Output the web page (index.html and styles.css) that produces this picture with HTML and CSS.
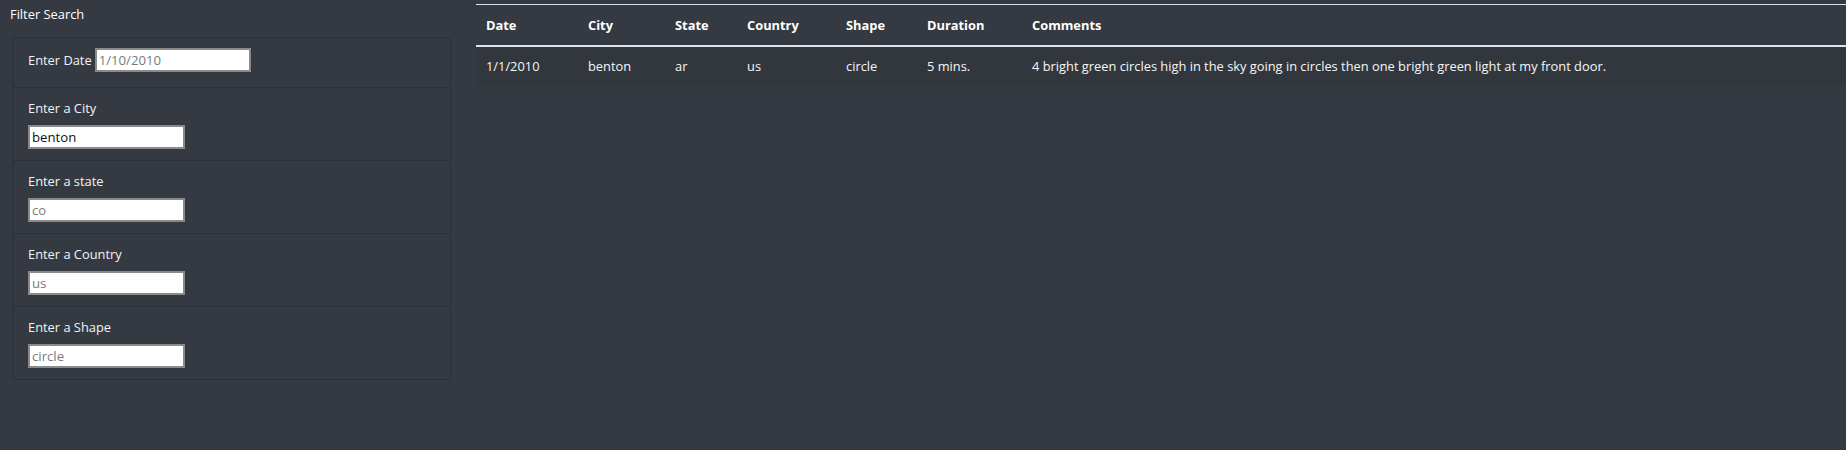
FILE: index.html
```html
<!DOCTYPE html>
<html lang="en">
<head>
<meta charset="utf-8">
<title>UFO Sightings</title>
<link rel="stylesheet" href="styles.css">
</head>
<body>
<div class="layout">
  <aside class="sidebar">
    <div class="sidebar-title">Filter Search</div>
    <ul class="filters">
      <li class="filter filter-inline">
        <label class="filter-label" for="datetime">Enter Date</label>
        <input class="filter-input" id="datetime" type="text" placeholder="1/10/2010">
      </li>
      <li class="filter">
        <label class="filter-label" for="city">Enter a City</label>
        <input class="filter-input" id="city" type="text" value="benton">
      </li>
      <li class="filter">
        <label class="filter-label" for="state">Enter a state</label>
        <input class="filter-input" id="state" type="text" placeholder="co">
      </li>
      <li class="filter">
        <label class="filter-label" for="country">Enter a Country</label>
        <input class="filter-input" id="country" type="text" placeholder="us">
      </li>
      <li class="filter">
        <label class="filter-label" for="shape">Enter a Shape</label>
        <input class="filter-input" id="shape" type="text" placeholder="circle">
      </li>
    </ul>
  </aside>
  <main class="results">
    <table class="ufo-table">
      <colgroup>
        <col class="c-date">
        <col class="c-city">
        <col class="c-state">
        <col class="c-country">
        <col class="c-shape">
        <col class="c-duration">
        <col class="c-comments">
      </colgroup>
      <thead>
        <tr>
          <th>Date</th>
          <th>City</th>
          <th>State</th>
          <th>Country</th>
          <th>Shape</th>
          <th>Duration</th>
          <th>Comments</th>
        </tr>
      </thead>
      <tbody>
        <tr>
          <td>1/1/2010</td>
          <td>benton</td>
          <td>ar</td>
          <td>us</td>
          <td>circle</td>
          <td>5 mins.</td>
          <td>4 bright green circles high in the sky going in circles then one bright green light at my front door.</td>
        </tr>
      </tbody>
    </table>
  </main>
</div>
</body>
</html>
```

FILE: styles.css
```css
html, body {
  margin: 0;
  padding: 0;
}

body {
  background: #353a42;
  color: #f4f5f6;
  font-family: "Open Sans", "Noto Sans", "DejaVu Sans", sans-serif;
  font-size: 12.85px;
  line-height: 20px;
  min-height: 450px;
}

.layout {
  display: flex;
  align-items: flex-start;
}

.sidebar {
  width: 439px;
  flex: none;
  padding: 4px 0 0 12px;
}

.sidebar-title {
  margin-left: -2px;
  color: #ffffff;
}

.filters {
  list-style: none;
  margin: 13px 0 0 0;
  padding: 0;
  border: 1px solid #2c3037;
  border-radius: 4px;
}

.filter {
  display: flex;
  flex-direction: column;
  align-items: flex-start;
  padding: 10px 15px 11px;
  border-top: 1px solid #2c3037;
}

.filter:first-child {
  border-top: none;
}

.filter-inline {
  flex-direction: row;
  align-items: center;
  gap: 3px;
  padding: 10px 15px 15px;
}

.filter-label {
  color: #f2f3f4;
  margin-bottom: 7px;
}

.filter-inline .filter-label {
  margin-bottom: 0;
}

.filter-input {
  box-sizing: border-box;
  width: 157px;
  height: 24px;
  margin: 0;
  padding: 0 2px;
  border: 2px solid #8a8a8a;
  border-radius: 0;
  background: #ffffff;
  color: #111111;
  font-family: inherit;
  font-size: 13.2px;
  outline: none;
}

.filter-inline .filter-input {
  width: 156px;
}

.filter-input::placeholder {
  color: #7a7a7a;
  opacity: 1;
}

.results {
  flex: 1;
  min-width: 0;
  padding: 4px 0 0 25px;
}

.ufo-table {
  width: 100%;
  table-layout: fixed;
  border-collapse: collapse;
  color: #ffffff;
}

.c-date { width: 102px; }
.c-city { width: 87px; }
.c-state { width: 72px; }
.c-country { width: 99px; }
.c-shape { width: 81px; }
.c-duration { width: 105px; }

.ufo-table th,
.ufo-table td {
  text-align: left;
  padding: 10px;
  white-space: nowrap;
}

.ufo-table th {
  font-weight: 700;
  border-top: 1px solid #dfe2e6;
  border-bottom: 2px solid #dfe2e6;
}

.ufo-table td {
  padding-top: 9px;
  padding-bottom: 10px;
  background: rgba(0, 0, 0, 0.05);
  color: #f6f6f6;
}
```
